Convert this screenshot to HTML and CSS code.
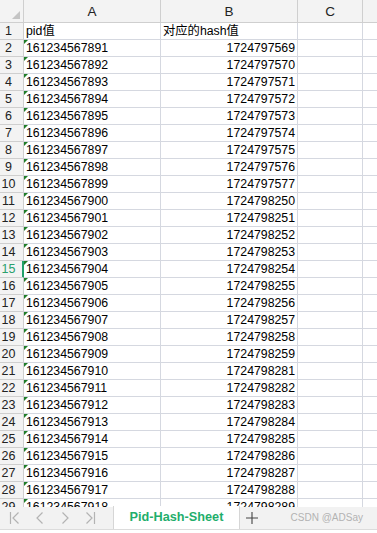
FILE: index.html
```html
<!DOCTYPE html>
<html lang="zh-CN">
<head>
    <meta charset="UTF-8">
    <meta name="viewport" content="width=device-width, initial-scale=1.0">
    <title>Pid-Hash-Sheet</title>
    <link rel="stylesheet" href="styles.css">
</head>
<body>
    <div class="sheet">
        <div class="grid" id="grid">
            <div class="corner"></div>
            <div class="col-head">A</div>
            <div class="col-head">B</div>
            <div class="col-head">C</div>
            <div class="col-head last"></div>

            <div class="row-head">1</div>
            <div class="cell">pid值</div>
            <div class="cell">对应的hash值</div>
            <div class="cell"></div>
            <div class="cell last"></div>
        </div>

        <div class="tab-bar">
            <div class="tab-nav">
                <span class="nav-btn">
                    <svg width="12" height="14" viewBox="0 0 12 14"><path d="M1.5 1v12M9.5 1.5L4 7l5.5 5.5" fill="none" stroke="#b3b3b3" stroke-width="1.2"/></svg>
                </span>
                <span class="nav-btn">
                    <svg width="12" height="14" viewBox="0 0 12 14"><path d="M8.5 1.5L3 7l5.5 5.5" fill="none" stroke="#b3b3b3" stroke-width="1.2"/></svg>
                </span>
                <span class="nav-btn">
                    <svg width="12" height="14" viewBox="0 0 12 14"><path d="M3.5 1.5L9 7l-5.5 5.5" fill="none" stroke="#b3b3b3" stroke-width="1.2"/></svg>
                </span>
                <span class="nav-btn">
                    <svg width="12" height="14" viewBox="0 0 12 14"><path d="M2.5 1.5L8 7l-5.5 5.5M10.5 1v12" fill="none" stroke="#b3b3b3" stroke-width="1.2"/></svg>
                </span>
            </div>
            <div class="sheet-tab">Pid-Hash-Sheet</div>
            <span class="add-sheet">
                <svg width="12" height="12" viewBox="0 0 12 12"><path d="M6 0v12M0 6h12" fill="none" stroke="#444" stroke-width="1.1"/></svg>
            </span>
            <span class="watermark">CSDN @ADSay</span>
        </div>
    </div>

    <script>
        const hashes = [
            1724797569, 1724797570, 1724797571, 1724797572, 1724797573, 1724797574,
            1724797575, 1724797576, 1724797577, 1724798250, 1724798251, 1724798252,
            1724798253, 1724798254, 1724798255, 1724798256, 1724798257, 1724798258,
            1724798259, 1724798281, 1724798282, 1724798283, 1724798284, 1724798285,
            1724798286, 1724798287, 1724798288, 1724798289
        ];

        const grid = document.getElementById('grid');
        let html = '';
        hashes.forEach((hash, i) => {
            const row = i + 2;
            const pid = 161234567891 + i;
            html += `
                <div class="row-head${row === 15 ? ' selected' : ''}">${row}</div>
                <div class="cell text-num">${pid}</div>
                <div class="cell num">${hash}</div>
                <div class="cell"></div>
                <div class="cell last"></div>
            `;
        });
        grid.insertAdjacentHTML('beforeend', html);
    </script>
</body>
</html>
```

FILE: styles.css
```css
body {
    margin: 0;
    padding: 0;
    background: #fff;
    font-family: "Liberation Sans", Arial, "Noto Sans CJK SC", sans-serif;
    color: #000;
}
.sheet {
    width: 377px;
    height: 533px;
    display: flex;
    flex-direction: column;
    overflow: hidden;
}
.grid {
    height: 507px;
    overflow: hidden;
    display: grid;
    grid-template-columns: 24px 137px 137px 65px 1fr;
    grid-auto-rows: 17px;
    grid-template-rows: 23px;
}
.corner,
.col-head,
.row-head,
.cell {
    box-sizing: border-box;
    border-right: 1px solid #d5d8e0;
    border-bottom: 1px solid #d5d8e0;
}
.corner {
    position: relative;
    background: #f3f3f3;
    border-color: #cfcfcf;
}
.corner::after {
    content: "";
    position: absolute;
    right: 3px;
    bottom: 3px;
    border-left: 8px solid transparent;
    border-bottom: 8px solid #c4c4c4;
}
.col-head {
    background: #f3f3f3;
    border-color: #cfcfcf;
    text-align: center;
    font-size: 13.5px;
    line-height: 24px;
    color: #222;
}
.row-head {
    background: #f3f3f3;
    border-color: #cfcfcf;
    font-size: 12.5px;
    line-height: 17px;
    text-align: center;
    padding-right: 6px;
    color: #222;
}
.row-head.selected {
    color: #2aa06c;
    border-right-color: #22a06a;
    box-shadow: inset -1px 0 0 #22a06a;
}
.cell {
    font-size: 12.3px;
    line-height: 17px;
    padding: 0 2px 0 2px;
    white-space: nowrap;
    overflow: visible;
}
.cell.num {
    text-align: right;
}
.cell.text-num {
    position: relative;
}
.cell.text-num::before {
    content: "";
    position: absolute;
    left: 0;
    top: 0;
    border-top: 4px solid #1f7d28;
    border-right: 4px solid transparent;
}
.last {
    border-right: none;
}
.tab-bar {
    flex: 1;
    display: flex;
    align-items: stretch;
    background: #f2f2f2;
    border-bottom: 1px solid #dcdcdc;
    margin-bottom: 3px;
    position: relative;
}
.tab-nav {
    display: flex;
    align-items: center;
    padding-left: 2px;
}
.nav-btn {
    width: 25px;
    display: flex;
    justify-content: center;
}
.sheet-tab {
    margin-left: 11px;
    width: 127px;
    box-sizing: border-box;
    background: #fff;
    border-left: 1px solid #d6d6d6;
    border-right: 1px solid #d6d6d6;
    color: #1fae6c;
    font-weight: bold;
    font-size: 12.7px;
    text-align: center;
    line-height: 23px;
    margin-top: -1px;
}
.add-sheet {
    display: flex;
    align-items: center;
    padding-left: 6px;
}
.watermark {
    margin-left: auto;
    margin-right: 14px;
    font-size: 10px;
    color: #b3b3b3;
    line-height: 22px;
}
```
